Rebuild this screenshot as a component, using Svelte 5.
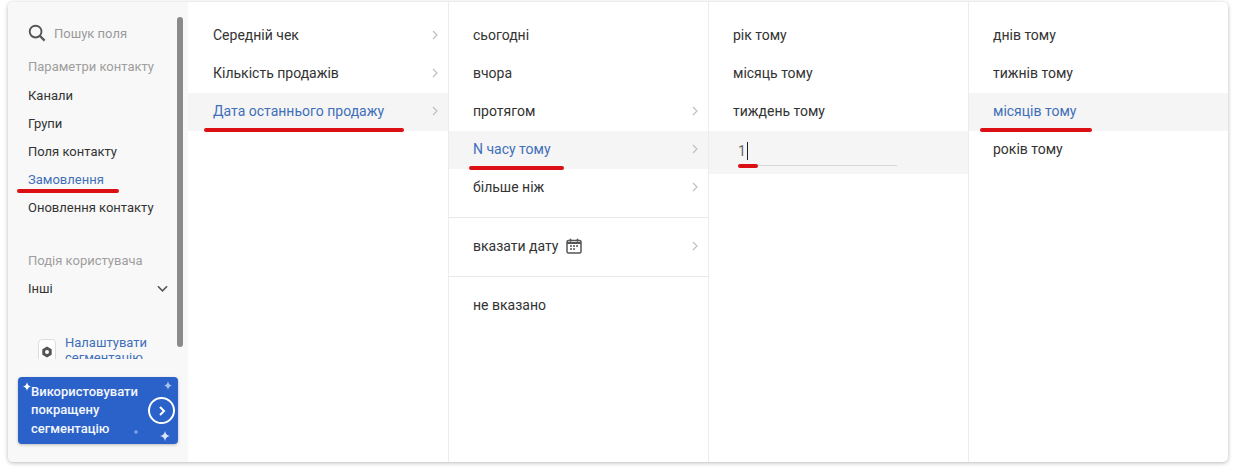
<script>
  const contactItems = [
    { label: "Канали" },
    { label: "Групи" },
    { label: "Поля контакту" },
    { label: "Замовлення", active: true, mark: 102 },
    { label: "Оновлення контакту" },
  ];

  const fields = [
    { label: "Середній чек", arrow: true },
    { label: "Кількість продажів", arrow: true },
    { label: "Дата останнього продажу", arrow: true, active: true, mark: 200, markLeft: 16 },
  ];

  const ranges = [
    [
      { label: "сьогодні" },
      { label: "вчора" },
      { label: "протягом", arrow: true },
      { label: "N часу тому", arrow: true, active: true, mark: 95, markLeft: 20 },
      { label: "більше ніж", arrow: true },
    ],
    [{ label: "вказати дату", arrow: true, calendar: true }],
    [{ label: "не вказано" }],
  ];

  const ago = [{ label: "рік тому" }, { label: "місяць тому" }, { label: "тиждень тому" }];

  const units = [
    { label: "днів тому" },
    { label: "тижнів тому" },
    { label: "місяців тому", active: true, mark: 112, markLeft: 11 },
    { label: "років тому" },
  ];
</script>

{#snippet row(item)}
  <div class="row" class:active={item.active}>
    <span class="row-label">{item.label}</span>
    {#if item.calendar}
      <svg class="calendar" width="16" height="16" viewBox="0 0 16 16">
        <path d="M4.5 .8v3M11.5 .8v3" stroke="#555" stroke-width="1.6" />
        <rect x="1" y="2.4" width="14" height="12.6" rx="1.5" fill="none" stroke="#555" stroke-width="1.5" />
        <path d="M1 5h14" stroke="#555" stroke-width="2" />
        <path d="M4 8h2M7 8h2M10 8h2M4 11h2M7 11h2" stroke="#555" stroke-width="1.5" />
      </svg>
    {/if}
    {#if item.arrow}
      <svg class="arrow" width="6" height="10" viewBox="0 0 6 10">
        <path d="M1 1l4 4-4 4" fill="none" stroke="#bdbdbd" stroke-width="1.1" />
      </svg>
    {/if}
    {#if item.mark}
      <span class="mark" style="width: {item.mark}px; left: {item.markLeft}px"></span>
    {/if}
  </div>
{/snippet}

<div class="stage">
  <div class="panel">
    <aside class="sidebar">
      <div class="scrollbar"></div>
      <div class="search">
        <svg width="18" height="18" viewBox="0 0 18 18">
          <circle cx="7.6" cy="7.6" r="5.9" fill="none" stroke="#555" stroke-width="1.9" />
          <path d="M12 12l4.6 4.6" stroke="#555" stroke-width="2.2" />
        </svg>
        <span>Пошук поля</span>
      </div>
      <div class="caption">Параметри контакту</div>
      {#each contactItems as item}
        <div class="side-item" class:active={item.active}>
          {item.label}
          {#if item.mark}
            <span class="mark" style="width: {item.mark}px"></span>
          {/if}
        </div>
      {/each}
      <div class="caption second">Подія користувача</div>
      <div class="side-item others">
        Інші
        <svg width="11" height="8" viewBox="0 0 12 8">
          <path d="M1 1l5 5 5-5" fill="none" stroke="#555" stroke-width="1.7" />
        </svg>
      </div>
      <div class="setup">
        <span class="setup-icon">
          <svg width="12" height="12" viewBox="0 0 12 12">
            <path d="M6 .6l4.7 2.7v5.4L6 11.4 1.300 8.700V3.300z" fill="#555" />
            <circle cx="6" cy="6" r="2" fill="#fff" />
          </svg>
        </span>
        <span class="setup-text">Налаштувати сегментацію</span>
      </div>
      <div class="promo">
        <svg class="sparkles" width="160" height="67" viewBox="0 0 160 67">
          <path d="M9 5q.6 4 4 4.500q-3.400.5-4 4.500q-.6-4-4-4.500q3.400-.5 4-4.500z" fill="#fff" />
          <path d="M150 4q.6 4 4 4.500q-3.400.5-4 4.500q-.6-4-4-4.500q3.400-.5 4-4.500z" fill="#a9c3ee" />
          <path d="M147 54q.8 4.500 5 5q-4.200.5-5 5q-.8-4.500-5-5q4.200-.5 5-5z" fill="#dbe6f8" />
          <circle cx="118" cy="55" r="1.800" fill="#7fa3e4" />
        </svg>
        <span class="promo-text">Використовувати покращену сегментацію</span>
        <span class="promo-go">
          <svg width="8" height="10" viewBox="0 0 8 10">
            <path d="M2 1l4 4-4 4" fill="none" stroke="#fff" stroke-width="2" />
          </svg>
        </span>
      </div>
    </aside>

    <section class="column">
      {#each fields as item}
        {@render row(item)}
      {/each}
    </section>

    <section class="column">
      {#each ranges as group, i}
        <div class="group" class:divided={i > 0}>
          {#each group as item}
            {@render row(item)}
          {/each}
        </div>
      {/each}
    </section>

    <section class="column">
      {#each ago as item}
        {@render row(item)}
      {/each}
      <div class="input-row">
        <div class="input">1<span class="caret"></span></div>
        <span class="mark" style="width: 20px"></span>
      </div>
    </section>

    <section class="column">
      {#each units as item}
        {@render row(item)}
      {/each}
    </section>
  </div>
</div>

<style>
  :global(body) {
    margin: 0;
    background: #fff;
    font-family: Roboto, "Liberation Sans", sans-serif;
  }

  .stage {
    padding: 2px 8px 7px 8px;
    height: 460px;
  }

  .panel {
    display: flex;
    height: 460px;
    background: #fff;
    border-radius: 5px;
    box-shadow: 0 1px 4px rgba(0, 0, 0, 0.28);
    overflow: hidden;
    color: #333;
    font-size: 14px;
  }

  .sidebar {
    position: relative;
    box-sizing: border-box;
    flex: 0 0 180px;
    padding: 13px 0 0 20px;
    background: #f8f8f8;
    font-size: 13px;
  }

  .scrollbar {
    position: absolute;
    top: 15px;
    right: 5px;
    width: 6px;
    height: 330px;
    border-radius: 3px;
    background: #8a8a8a;
  }

  .search {
    display: flex;
    align-items: center;
    gap: 8px;
    height: 36px;
    color: #9a9a9a;
  }

  .caption {
    height: 29px;
    line-height: 28px;
    margin-top: 2px;
    color: #9e9e9e;
  }

  .caption.second {
    margin-top: 25px;
  }

  .side-item {
    position: relative;
    height: 28px;
    line-height: 28px;
    color: #333;
  }

  .side-item.active {
    color: #3f6fb8;
  }

  .side-item .mark {
    left: -11px;
    bottom: 1px;
  }

  .others {
    display: flex;
    justify-content: space-between;
    align-items: center;
    height: 26px;
    padding-right: 20px;
  }

  .setup {
    display: flex;
    gap: 9px;
    height: 24px;
    margin: 33px 0 0 10px;
    overflow: hidden;
    line-height: 15px;
    color: #3f6fb8;
  }

  .setup-icon {
    display: flex;
    align-items: center;
    justify-content: center;
    flex: none;
    box-sizing: border-box;
    width: 18px;
    height: 26px;
    margin-top: 4px;
    border: 1px solid #ddd;
    border-radius: 4px;
    background: #fff;
  }

  .setup-text {
    width: 90px;
  }

  .promo {
    position: relative;
    display: flex;
    align-items: center;
    box-sizing: border-box;
    width: 160px;
    height: 67px;
    margin: 18px 0 0 -10px;
    padding-left: 13px;
    border-radius: 4px;
    background: #2b62c9;
    box-shadow: 0 1px 3px rgba(0, 0, 0, 0.25);
    color: #f4f7fd;
    font-size: 13px;
    font-weight: 500;
    line-height: 18.500px;
  }

  .sparkles {
    position: absolute;
    left: 0;
    top: 0;
  }

  .promo-text {
    width: 112px;
  }

  .promo-go {
    position: absolute;
    right: 3px;
    top: 20px;
    display: flex;
    align-items: center;
    justify-content: center;
    box-sizing: border-box;
    width: 27px;
    height: 27px;
    border: 2px solid #fff;
    border-radius: 50%;
  }

  .column {
    box-sizing: border-box;
    flex: 0 0 260px;
    padding-top: 15px;
    border-left: 1px solid #ececec;
  }

  .column:nth-of-type(1) {
    border-left: 0;
  }

  .column:nth-of-type(1) .row {
    padding-left: 25px;
  }

  .group {
    padding-bottom: 10px;
  }

  .group.divided {
    padding-top: 10px;
    border-top: 1px solid #e8e8e8;
  }

  .row {
    position: relative;
    display: flex;
    align-items: center;
    box-sizing: border-box;
    height: 38px;
    padding: 0 10px 2px 24px;
  }

  .row.active {
    background: #f5f5f6;
  }

  .row.active .row-label {
    color: #3f6fb8;
  }

  .calendar {
    margin-left: 8px;
  }

  .arrow {
    margin-left: auto;
  }

  .mark {
    position: absolute;
    bottom: -1px;
    height: 4px;
    border-radius: 2px;
    background: #dc0f14;
  }

  .input-row {
    position: relative;
    height: 43px;
    padding: 0 71px 0 29px;
    background: #f5f5f6;
  }

  .input {
    display: flex;
    align-items: center;
    height: 29px;
    padding-top: 5px;
    border-bottom: 1px solid #d8d8d8;
    color: #666;
  }

  .caret {
    width: 1px;
    height: 18px;
    margin-left: 1px;
    background: #222;
  }

  .input-row .mark {
    left: 29px;
    bottom: 6px;
  }
</style>
